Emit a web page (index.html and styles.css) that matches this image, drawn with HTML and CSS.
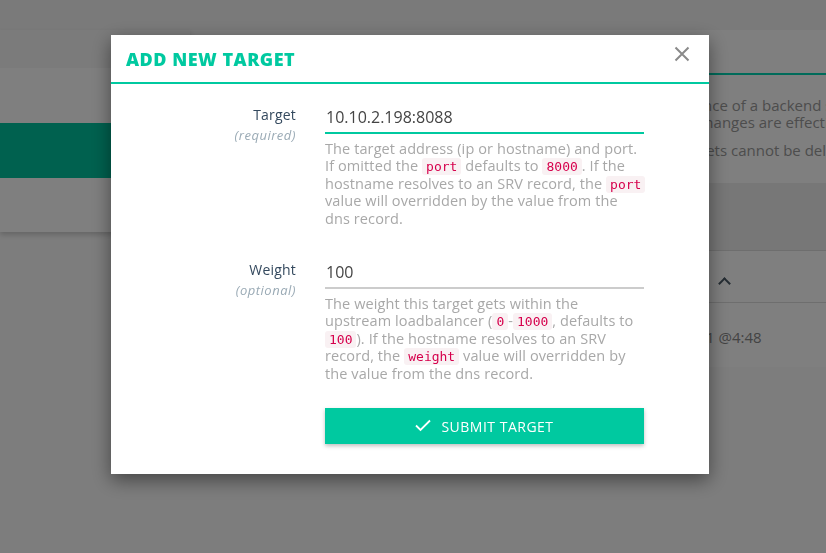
FILE: index.html
```html
<!DOCTYPE html>
<html>
<head>
<meta charset="utf-8">
<link rel="stylesheet" href="styles.css">
</head>
<body>
<div class="page">
  <div class="topbar"></div>
  <div class="main">
    <aside class="nav">
      <div class="nav-head"></div>
      <div class="nav-item"></div>
      <div class="nav-item active"></div>
      <div class="nav-item"></div>
    </aside>
    <section class="content">
      <div class="card">
        <div class="card-head"></div>
        <div class="card-text">
          <p>The target is an ip or hostname with a port that identifies an instance of a backend service.</p>
          <p>An upstream can have many targets, and targets can be moved. Changes are effective on the fly.</p>
          <p class="gap">Since the upstream maintains a history of target changes, the targets cannot be deleted or modified.</p>
        </div>
        <div class="card-band"></div>
        <div class="card-row"><span class="chev"></span></div>
        <div class="card-row last"><span class="date">Dec 16, 2021 @4:48</span></div>
      </div>
    </section>
  </div>
</div>

<div class="overlay"></div>

<div class="modal">
  <header class="modal-head">
    <h2 class="modal-title">ADD NEW TARGET</h2>
    <button class="close" aria-label="close">
      <svg width="16" height="16" viewBox="0 0 16 16"><path d="M1.5 1.5 L14.5 14.5 M14.5 1.5 L1.5 14.5" stroke="#8a8a8a" stroke-width="2" fill="none"/></svg>
    </button>
  </header>
  <div class="modal-body">
    <div class="field">
      <div class="label">
        <div class="label-name">Target</div>
        <div class="label-note">(required)</div>
      </div>
      <div class="control">
        <div class="input active">10.10.2.198:8088</div>
        <p class="help">The target address (ip or hostname) and port.<br>If omitted the <code>port</code> defaults to <code>8000</code>. If the<br>hostname resolves to an SRV record, the <code>port</code><br>value will overridden by the value from the<br>dns record.</p>
      </div>
    </div>
    <div class="field second">
      <div class="label">
        <div class="label-name">Weight</div>
        <div class="label-note">(optional)</div>
      </div>
      <div class="control">
        <div class="input">100</div>
        <p class="help">The weight this target gets within the<br>upstream loadbalancer (<code>0</code>-<code>1000</code>, defaults to<br><code>100</code>). If the hostname resolves to an SRV<br>record, the <code>weight</code> value will overridden by<br>the value from the dns record.</p>
      </div>
    </div>
    <div class="field">
      <div class="label"></div>
      <div class="control">
        <button class="submit">
          <svg width="16" height="13" viewBox="0 0 16 13"><path d="M1 6.5 L5.5 11 L15 1.5" stroke="#fff" stroke-width="1.8" fill="none"/></svg>
          <span>SUBMIT TARGET</span>
        </button>
      </div>
    </div>
  </div>
</div>
</body>
</html>
```

FILE: styles.css
```css
* { box-sizing: border-box; }
html, body { margin: 0; padding: 0; }
body {
  width: 826px;
  height: 553px;
  overflow: hidden;
  font-family: "Open Sans", "Liberation Sans", sans-serif;
  background: #fafafa;
  color: #333;
}
.page { width: 826px; height: 553px; overflow: hidden; }
.topbar { height: 30px; background: #f4f4f4; }
.main { display: flex; gap: 30px; align-items: flex-start; }
.nav {
  width: 190px;
  flex: none;
  background: #fff;
  box-shadow: 0 3px 5px rgba(0,0,0,0.18);
}
.nav-head { height: 38px; background: #f6f6f6; }
.nav-item { height: 55px; }
.nav-item.active { background: #00c29e; }
.nav-item:last-child { height: 54px; }
.content { flex: 1; min-width: 0; overflow: hidden; }
.card { background: #fff; width: 700px; }
.card-head { height: 45px; border-bottom: 2px solid #00d6b4; background: #fff; }
.card-text { padding: 22px 0 0 26px; height: 108px; font-size: 15px; color: #9a9a9a; white-space: nowrap; }
.card-text p { margin: 0; line-height: 17px; }
.card-text p.gap { margin-top: 11px; }
.card-band { height: 68px; background: #efefef; border-bottom: 1px solid #ddd; }
.card-row { height: 52px; border-bottom: 1px solid #ddd; display: flex; align-items: center; padding-left: 500px; }
.chev { width: 9px; height: 9px; border-top: 2.5px solid #4a5a66; border-left: 2.5px solid #4a5a66; transform: rotate(45deg); margin-top: 14px; }
.card-row.last { border-bottom: none; height: 64px; align-items: flex-start; padding: 24px 0 0 405px; color: #888; font-size: 15px; }

.overlay { position: fixed; inset: 0; background: rgba(0,0,0,0.5); }

.modal {
  position: fixed;
  left: 111px;
  top: 35px;
  width: 598px;
  height: 439px;
  background: #fff;
  box-shadow: 0 6px 18px rgba(0,0,0,0.45);
}
.modal-head {
  height: 49px;
  border-bottom: 2px solid #00c9a0;
  display: flex;
  align-items: center;
  justify-content: space-between;
  padding: 0 19px 0 15px;
}
.modal-title {
  margin: 0;
  font-size: 18px;
  font-weight: 800;
  color: #00c9a0;
  letter-spacing: 0.5px;
}
.close { background: none; border: 0; padding: 0; margin-top: -10px; width: 16px; height: 16px; display: block; }
.close svg { display: block; }
.modal-body { padding: 16px 65px 30px 0; display: flex; flex-direction: column; gap: 23px; }
.field { display: flex; gap: 29px; }
.field.second { margin-top: 5px; }
.label { width: 185px; text-align: right; padding-top: 6px; }
.label-name { font-size: 14px; color: #34495e; line-height: 18px; letter-spacing: 0.2px; }
.label-note { font-size: 13px; color: #9aaab5; font-style: italic; line-height: 18px; margin-top: 2px; letter-spacing: 0.5px; }
.control { width: 319px; }
.input {
  height: 34px;
  font-size: 16px;
  color: #444;
  padding: 6px 0 0 1px;
  border-bottom: 2px solid #ccc;
}
.input.active { border-bottom-color: #00c9a0; }
.help {
  margin: 6px 0 0 0;
  font-size: 14.5px;
  letter-spacing: 0.1px;
  line-height: 17.4px;
  color: #a8a8a8;
  white-space: nowrap;
}
code {
  font-family: "DejaVu Sans Mono", monospace;
  font-size: 13px;
  line-height: 14px;
  letter-spacing: 0;
  color: #d6004c;
  background: #f9f1f3;
  padding: 1px 4px;
  border-radius: 3px;
}
.submit {
  width: 319px;
  height: 36px;
  margin-top: 3px;
  background: #00c9a0;
  border: 0;
  color: #fff;
  font-family: inherit;
  font-size: 14px;
  letter-spacing: 0.5px;
  display: flex;
  align-items: center;
  justify-content: center;
  gap: 10px;
  box-shadow: 0 2px 4px rgba(0,0,0,0.25);
}
.submit svg { display: block; margin-top: -1px; }
```
